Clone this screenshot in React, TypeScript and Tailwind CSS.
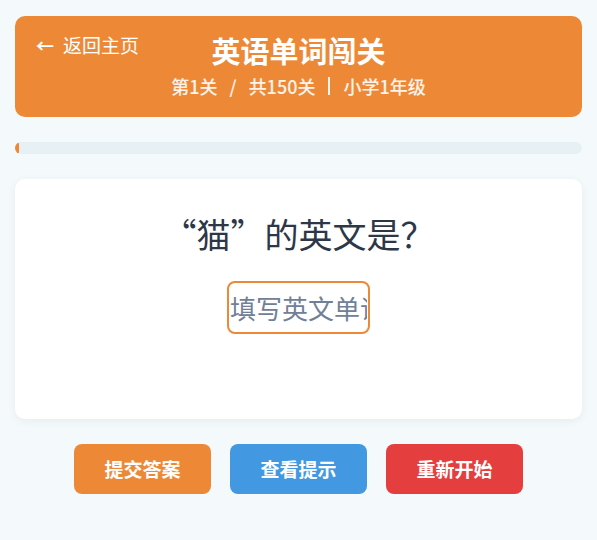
import React from "react";

const font = { fontFamily: '"Noto Sans CJK SC", "Noto Sans", sans-serif' };

export default function App() {
  return (
    <div className="min-h-[540px] w-full bg-[#f4f9fc] px-[15px] pt-[16px]" style={font}>
      <div className="relative flex h-[101px] flex-col items-center rounded-[10px] bg-[#ed8936] pt-[13px] text-white">
        <a className="absolute left-[21px] top-[16px] flex items-center gap-[9px] text-[19px] leading-[26px]">
          <span className="text-[18px] font-bold">←</span>
          <span>返回主页</span>
        </a>
        <h1 className="text-[29px] font-bold leading-[42px]">英语单词闯关</h1>
        <div className="mt-[3px] flex items-center gap-[12px] text-[18px] font-medium leading-[24px] text-white/90">
          <span>第1关</span>
          <span>/</span>
          <span>共150关</span>
          <span className="mx-[1px] h-[18px] w-[2px] bg-white/90"></span>
          <span>小学1年级</span>
        </div>
      </div>

      <div className="mt-[25px] h-[12px] w-full overflow-hidden rounded-full bg-[#e7f1f5]">
        <div className="h-full w-[4px] rounded-full bg-[#ed8936]"></div>
      </div>

      <div className="mt-[25px] flex h-[240px] flex-col items-center rounded-[10px] bg-white pt-[32px] shadow-[0_2px_10px_rgba(0,0,0,0.06)]">
        <div className="text-[34px] leading-[46px] text-[#2d3748]">“猫”的英文是？</div>
        <input
          className="mt-[24px] h-[53px] w-[143px] rounded-[8px] border-2 border-[#ed8936] px-[1px] text-[26px] text-[#4a5568] outline-none placeholder:text-[#718096]"
          style={font}
          placeholder="填写英文单词"
        />
      </div>

      <div className="mt-[25px] flex justify-center gap-[19px]">
        <button className="h-[50px] w-[137px] rounded-[8px] bg-[#ed8936] text-[19px] font-bold text-white">提交答案</button>
        <button className="h-[50px] w-[137px] rounded-[8px] bg-[#4299e1] text-[19px] font-bold text-white">查看提示</button>
        <button className="h-[50px] w-[137px] rounded-[8px] bg-[#e53e3e] text-[19px] font-bold text-white">重新开始</button>
      </div>
    </div>
  );
}
